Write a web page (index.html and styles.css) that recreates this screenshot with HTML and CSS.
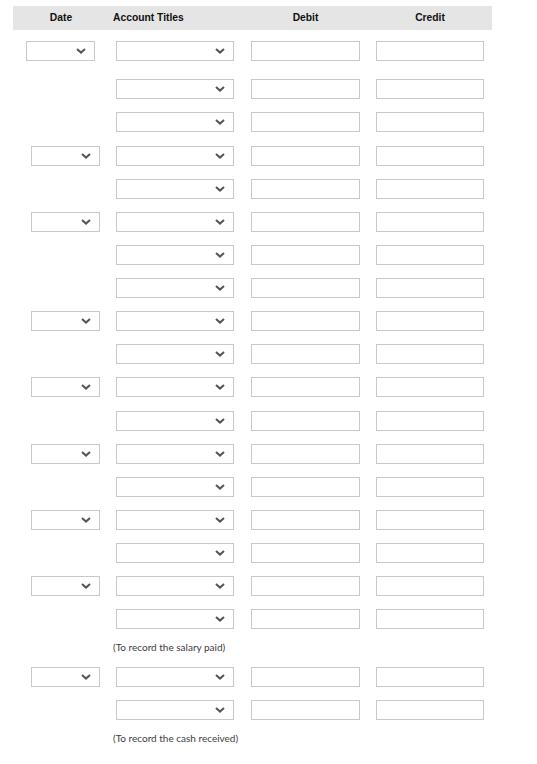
FILE: index.html
```html
<!DOCTYPE html>
<html>
<head>
<meta charset="utf-8">
<link rel="stylesheet" href="styles.css">
</head>
<body>
<div class="journal">
  <div class="head">
    <div class="h-date">Date</div>
    <div class="h-acct">Account Titles</div>
    <div class="h-debit">Debit</div>
    <div class="h-credit">Credit</div>
  </div>

  <div class="row first">
    <div class="datecell"><div class="sel date-sel shift"><svg class="chev" width="10" height="6" viewBox="0 0 10 6"><polyline points="1,1 5,4.6 9,1"/></svg></div></div>
    <div class="sel acct-sel"><svg class="chev" width="10" height="6" viewBox="0 0 10 6"><polyline points="1,1 5,4.6 9,1"/></svg></div>
    <input class="amt debit" type="text"><input class="amt credit" type="text">
  </div>
  <div class="row">
    <div class="datecell"></div>
    <div class="sel acct-sel"><svg class="chev" width="10" height="6" viewBox="0 0 10 6"><polyline points="1,1 5,4.6 9,1"/></svg></div>
    <input class="amt debit" type="text"><input class="amt credit" type="text">
  </div>
  <div class="row">
    <div class="datecell"></div>
    <div class="sel acct-sel"><svg class="chev" width="10" height="6" viewBox="0 0 10 6"><polyline points="1,1 5,4.6 9,1"/></svg></div>
    <input class="amt debit" type="text"><input class="amt credit" type="text">
  </div>

  <div class="row">
    <div class="datecell"><div class="sel date-sel"><svg class="chev" width="10" height="6" viewBox="0 0 10 6"><polyline points="1,1 5,4.6 9,1"/></svg></div></div>
    <div class="sel acct-sel"><svg class="chev" width="10" height="6" viewBox="0 0 10 6"><polyline points="1,1 5,4.6 9,1"/></svg></div>
    <input class="amt debit" type="text"><input class="amt credit" type="text">
  </div>
  <div class="row">
    <div class="datecell"></div>
    <div class="sel acct-sel"><svg class="chev" width="10" height="6" viewBox="0 0 10 6"><polyline points="1,1 5,4.6 9,1"/></svg></div>
    <input class="amt debit" type="text"><input class="amt credit" type="text">
  </div>

  <div class="row">
    <div class="datecell"><div class="sel date-sel"><svg class="chev" width="10" height="6" viewBox="0 0 10 6"><polyline points="1,1 5,4.6 9,1"/></svg></div></div>
    <div class="sel acct-sel"><svg class="chev" width="10" height="6" viewBox="0 0 10 6"><polyline points="1,1 5,4.6 9,1"/></svg></div>
    <input class="amt debit" type="text"><input class="amt credit" type="text">
  </div>
  <div class="row">
    <div class="datecell"></div>
    <div class="sel acct-sel"><svg class="chev" width="10" height="6" viewBox="0 0 10 6"><polyline points="1,1 5,4.6 9,1"/></svg></div>
    <input class="amt debit" type="text"><input class="amt credit" type="text">
  </div>
  <div class="row">
    <div class="datecell"></div>
    <div class="sel acct-sel"><svg class="chev" width="10" height="6" viewBox="0 0 10 6"><polyline points="1,1 5,4.6 9,1"/></svg></div>
    <input class="amt debit" type="text"><input class="amt credit" type="text">
  </div>

  <div class="row">
    <div class="datecell"><div class="sel date-sel"><svg class="chev" width="10" height="6" viewBox="0 0 10 6"><polyline points="1,1 5,4.6 9,1"/></svg></div></div>
    <div class="sel acct-sel"><svg class="chev" width="10" height="6" viewBox="0 0 10 6"><polyline points="1,1 5,4.6 9,1"/></svg></div>
    <input class="amt debit" type="text"><input class="amt credit" type="text">
  </div>
  <div class="row">
    <div class="datecell"></div>
    <div class="sel acct-sel"><svg class="chev" width="10" height="6" viewBox="0 0 10 6"><polyline points="1,1 5,4.6 9,1"/></svg></div>
    <input class="amt debit" type="text"><input class="amt credit" type="text">
  </div>

  <div class="row">
    <div class="datecell"><div class="sel date-sel"><svg class="chev" width="10" height="6" viewBox="0 0 10 6"><polyline points="1,1 5,4.6 9,1"/></svg></div></div>
    <div class="sel acct-sel"><svg class="chev" width="10" height="6" viewBox="0 0 10 6"><polyline points="1,1 5,4.6 9,1"/></svg></div>
    <input class="amt debit" type="text"><input class="amt credit" type="text">
  </div>
  <div class="row">
    <div class="datecell"></div>
    <div class="sel acct-sel"><svg class="chev" width="10" height="6" viewBox="0 0 10 6"><polyline points="1,1 5,4.6 9,1"/></svg></div>
    <input class="amt debit" type="text"><input class="amt credit" type="text">
  </div>

  <div class="row">
    <div class="datecell"><div class="sel date-sel"><svg class="chev" width="10" height="6" viewBox="0 0 10 6"><polyline points="1,1 5,4.6 9,1"/></svg></div></div>
    <div class="sel acct-sel"><svg class="chev" width="10" height="6" viewBox="0 0 10 6"><polyline points="1,1 5,4.6 9,1"/></svg></div>
    <input class="amt debit" type="text"><input class="amt credit" type="text">
  </div>
  <div class="row">
    <div class="datecell"></div>
    <div class="sel acct-sel"><svg class="chev" width="10" height="6" viewBox="0 0 10 6"><polyline points="1,1 5,4.6 9,1"/></svg></div>
    <input class="amt debit" type="text"><input class="amt credit" type="text">
  </div>

  <div class="row">
    <div class="datecell"><div class="sel date-sel"><svg class="chev" width="10" height="6" viewBox="0 0 10 6"><polyline points="1,1 5,4.6 9,1"/></svg></div></div>
    <div class="sel acct-sel"><svg class="chev" width="10" height="6" viewBox="0 0 10 6"><polyline points="1,1 5,4.6 9,1"/></svg></div>
    <input class="amt debit" type="text"><input class="amt credit" type="text">
  </div>
  <div class="row">
    <div class="datecell"></div>
    <div class="sel acct-sel"><svg class="chev" width="10" height="6" viewBox="0 0 10 6"><polyline points="1,1 5,4.6 9,1"/></svg></div>
    <input class="amt debit" type="text"><input class="amt credit" type="text">
  </div>

  <div class="row">
    <div class="datecell"><div class="sel date-sel"><svg class="chev" width="10" height="6" viewBox="0 0 10 6"><polyline points="1,1 5,4.6 9,1"/></svg></div></div>
    <div class="sel acct-sel"><svg class="chev" width="10" height="6" viewBox="0 0 10 6"><polyline points="1,1 5,4.6 9,1"/></svg></div>
    <input class="amt debit" type="text"><input class="amt credit" type="text">
  </div>
  <div class="row">
    <div class="datecell"></div>
    <div class="sel acct-sel"><svg class="chev" width="10" height="6" viewBox="0 0 10 6"><polyline points="1,1 5,4.6 9,1"/></svg></div>
    <input class="amt debit" type="text"><input class="amt credit" type="text">
  </div>
  <div class="note">(To record the salary paid)</div>

  <div class="row r33">
    <div class="datecell"><div class="sel date-sel"><svg class="chev" width="10" height="6" viewBox="0 0 10 6"><polyline points="1,1 5,4.6 9,1"/></svg></div></div>
    <div class="sel acct-sel"><svg class="chev" width="10" height="6" viewBox="0 0 10 6"><polyline points="1,1 5,4.6 9,1"/></svg></div>
    <input class="amt debit" type="text"><input class="amt credit" type="text">
  </div>
  <div class="row">
    <div class="datecell"></div>
    <div class="sel acct-sel"><svg class="chev" width="10" height="6" viewBox="0 0 10 6"><polyline points="1,1 5,4.6 9,1"/></svg></div>
    <input class="amt debit" type="text"><input class="amt credit" type="text">
  </div>
  <div class="note">(To record the cash received)</div>
</div>
</body>
</html>
```

FILE: styles.css
```css
html, body {
  margin: 0;
  padding: 0;
  background: #ffffff;
}

.journal {
  padding-top: 6px;
  width: 537px;
}

.head {
  display: flex;
  margin-left: 13px;
  width: 479px;
  height: 24px;
  background: #e5e5e5;
  font-family: "Liberation Sans", Arial, sans-serif;
  font-weight: bold;
  font-size: 10.3px;
  line-height: 24px;
  color: #111;
}

.h-date {
  width: 96px;
  text-align: center;
}

.h-acct {
  width: 132px;
  padding-left: 4px;
}

.h-debit {
  width: 121px;
  text-align: center;
}

.h-credit {
  width: 124px;
  padding-left: 2px;
  text-align: center;
}

.row {
  display: flex;
  align-items: flex-start;
  height: 33.125px;
}

.row.first {
  margin-top: 11.3px;
  height: 38px;
}

.row.r33 {
  height: 33px;
}

.datecell {
  width: 116px;
  flex: none;
  height: 20px;
}

.sel {
  box-sizing: border-box;
  height: 20px;
  border: 1px solid #c8c8c8;
  background: #fff;
  display: flex;
  align-items: center;
  justify-content: flex-end;
  padding-right: 8px;
  flex: none;
}

.date-sel {
  width: 69px;
  margin-left: 31px;
}

.date-sel.shift {
  margin-left: 26px;
}

.acct-sel {
  width: 118px;
}

.chev {
  display: block;
  fill: none;
  stroke: #555;
  stroke-width: 2;
  stroke-linecap: butt;
  stroke-linejoin: miter;
}

.amt {
  box-sizing: border-box;
  height: 20px;
  margin: 0;
  padding: 0;
  border: 1px solid #c8c8c8;
  background: #fff;
  outline: none;
  flex: none;
}

.debit {
  width: 109px;
  margin-left: 17px;
}

.credit {
  width: 108px;
  margin-left: 16px;
}

.note {
  height: 24.2px;
  padding-left: 113px;
  font-family: Lato, "Open Sans", sans-serif;
  font-size: 10px;
  line-height: 11px;
  color: #3d3d3d;
}
```
